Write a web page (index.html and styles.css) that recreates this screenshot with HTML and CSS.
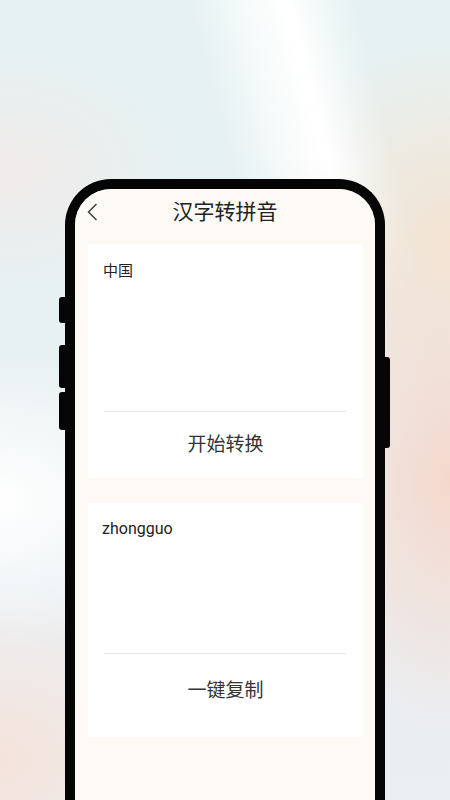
FILE: index.html
```html
<!DOCTYPE html>
<html lang="zh-CN">
<head>
    <meta charset="UTF-8">
    <meta name="viewport" content="width=device-width, initial-scale=1.0">
    <title>汉字转拼音</title>
    <link rel="stylesheet" href="styles.css">
</head>
<body>

<div class="phone">
    <span class="key key-left key-1"></span>
    <span class="key key-left key-2"></span>
    <span class="key key-left key-3"></span>
    <span class="key key-right key-4"></span>

    <div class="screen">
        <div class="topbar">
            <svg class="back" width="12" height="18" viewBox="0 0 12 18">
                <polyline points="10,1.5 2.5,9 10,16.5" fill="none" stroke="#444" stroke-width="1.6" stroke-linecap="round" stroke-linejoin="round"/>
            </svg>
            <h1 class="title">汉字转拼音</h1>
        </div>

        <div class="content">
            <div class="card card-input">
                <div class="card-text">中国</div>
                <div class="divider"></div>
                <div class="card-action">开始转换</div>
            </div>

            <div class="card card-output">
                <div class="card-text pinyin">zhongguo</div>
                <div class="divider"></div>
                <div class="card-action">一键复制</div>
            </div>
        </div>
    </div>
</div>

</body>
</html>
```

FILE: styles.css
```css
html, body {
    margin: 0;
    height: 800px;
    overflow: hidden;
}
body {
    position: relative;
    font-family: "Noto Sans CJK SC", "Noto Sans", sans-serif;
    color: #333;
    background-color: #e9eff2;
    background-image:
        radial-gradient(ellipse 190px 150px at 0 500px, #ffffff, rgba(255, 255, 255, 0)),
        radial-gradient(ellipse 150px 260px at 450px 480px, #f5d8cc, rgba(245, 216, 204, 0)),
        radial-gradient(ellipse 190px 200px at 450px 240px, #f3e3d2, rgba(243, 227, 210, 0)),
        radial-gradient(ellipse 200px 180px at 0 760px, #f5e3db, rgba(245, 227, 219, 0)),
        radial-gradient(ellipse 180px 120px at 0 170px, #f1ebea, rgba(241, 235, 234, 0)),
        linear-gradient(180deg, #e6f2f2 0%, #e8f0f2 55%, #ebeef3 100%);
    background-repeat: no-repeat;
}
/* light beam across the top */
body::before {
    content: "";
    position: absolute;
    top: 0;
    left: 0;
    width: 450px;
    height: 300px;
    background: linear-gradient(76deg, rgba(255, 255, 255, 0) 50%, rgba(255, 255, 255, 0.7) 62%, #ffffff 69%, rgba(255, 255, 255, 0.4) 76%, rgba(255, 255, 255, 0) 82%);
    -webkit-mask-image: linear-gradient(180deg, #000 55%, transparent 100%);
    mask-image: linear-gradient(180deg, #000 55%, transparent 100%);
}

.phone {
    position: relative;
    width: 320px;
    height: 660px;
    margin: 179px auto 0;
    box-sizing: border-box;
    border: 10px solid #050505;
    border-bottom: none;
    border-radius: 46px 46px 0 0;
}
.key {
    position: absolute;
    width: 6px;
    background: #050505;
}
.key-left {
    left: -16px;
    border-radius: 3px 0 0 3px;
}
.key-right {
    right: -15px;
    border-radius: 0 3px 3px 0;
}
.key-1 { top: 108px; height: 26px; }
.key-2 { top: 156px; height: 43px; }
.key-3 { top: 203px; height: 38px; }
.key-4 { top: 168px; height: 91px; }

.screen {
    height: 100%;
    background: #fdf9f5;
    border-radius: 36px 36px 0 0;
    overflow: hidden;
}

.topbar {
    position: relative;
    height: 46px;
    display: flex;
    align-items: center;
    justify-content: center;
}
.back {
    position: absolute;
    left: 11px;
    top: 14px;
}
.title {
    margin: 0 0 4px;
    font-size: 21px;
    font-weight: 400;
    color: #222;
    line-height: 28px;
}

.content {
    padding: 9px 12px 0 13px;
}
.card {
    background: #fff;
    margin-bottom: 25px;
}
.card-text {
    box-sizing: border-box;
    padding: 16px 15px 0;
    font-size: 15px;
    line-height: 20px;
    color: #222;
}
.card-input .card-text {
    height: 167px;
}
.card-output .card-text {
    height: 150px;
    padding-left: 14px;
}
.pinyin {
    font-family: Roboto, "Noto Sans", sans-serif;
    font-size: 16px;
}
.divider {
    height: 1px;
    margin: 0 17px 0 16px;
    background: #e8e8e8;
}
.card-action {
    box-sizing: border-box;
    display: flex;
    align-items: center;
    justify-content: center;
    height: 66px;
    padding-bottom: 5px;
    font-size: 19px;
    color: #333;
}
.card-output .card-action {
    height: 83px;
    padding-bottom: 15px;
}
```
